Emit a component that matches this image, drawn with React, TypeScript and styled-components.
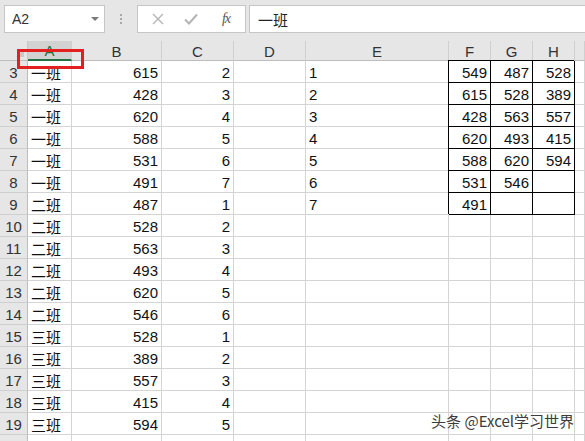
import React from "react";
import styled, { createGlobalStyle } from "styled-components";

const Global = createGlobalStyle`
  html, body { margin: 0; padding: 0; background: #fff; overflow: hidden; }
  body { font-family: "Liberation Sans", "Noto Sans CJK SC", sans-serif; }
  * { box-sizing: border-box; }
`;

const Page = styled.div`
  width: 585px;
  height: 441px;
  position: relative;
  overflow: hidden;
  background: #fff;
`;

const FormulaBar = styled.div`
  height: 41px;
  background: #e6e6e6;
  display: flex;
  align-items: flex-start;
  padding: 5px 0 0 4px;
`;

const NameBox = styled.div`
  width: 101px;
  height: 28px;
  background: #fff;
  border: 1px solid #c6c6c6;
  display: flex;
  align-items: center;
  justify-content: space-between;
  padding: 0 5px 0 7px;
  font-size: 14px;
  color: #333;
`;

const DropTri = styled.span`
  width: 0;
  height: 0;
  border-left: 4px solid transparent;
  border-right: 4px solid transparent;
  border-top: 4px solid #7a7a7a;
`;

const Dots = styled.div`
  width: 32px;
  height: 28px;
  display: flex;
  flex-direction: column;
  align-items: center;
  justify-content: center;
  gap: 2px;
`;

const Dot = styled.span`
  width: 2px;
  height: 2px;
  background: #a8a8a8;
`;

const ButtonsBox = styled.div`
  width: 109px;
  height: 28px;
  background: #fff;
  border: 1px solid #c6c6c6;
  display: flex;
  align-items: center;
  padding: 0 0 0 11px;
  gap: 15px;
`;

const IconSlot = styled.span`
  width: 18px;
  height: 18px;
  display: flex;
  align-items: center;
  justify-content: center;
`;

const Fx = styled.span`
  font-family: "Liberation Serif", serif;
  font-style: italic;
  font-size: 14px;
  color: #555;
  margin-left: 4px;
  letter-spacing: -1px;
`;

const FormulaInput = styled.div`
  flex: 1;
  height: 28px;
  margin-left: 3px;
  background: #fff;
  border: 1px solid #c6c6c6;
  border-right: none;
  display: flex;
  align-items: center;
  padding-left: 8px;
  font-family: "Noto Sans CJK SC", sans-serif;
  font-size: 15px;
  color: #222;
`;

const Grid = styled.div`
  display: grid;
  grid-template-columns: 28px 44px 90px 72px 72px 143px 42px 42px 42px 1fr;
  grid-auto-rows: 22px;
  grid-template-rows: 20px;
`;

const Corner = styled.div`
  background: #e6e6e6;
  border-right: 1px solid #c6c6c6;
  border-bottom: 1px solid #bdbdbd;
  display: flex;
  align-items: flex-end;
  justify-content: flex-end;
  padding: 0 3px 3px 0;
`;

const CornerTri = styled.span`
  width: 0;
  height: 0;
  border-left: 8px solid transparent;
  border-bottom: 8px solid #c8c8c8;
`;

const ColHead = styled.div<{ $active?: boolean }>`
  background: ${(p) => (p.$active ? "#d2d2d2" : "#e6e6e6")};
  border-right: 1px solid #cfcfcf;
  border-bottom: ${(p) => (p.$active ? "2px solid #217346" : "1px solid #bdbdbd")};
  display: flex;
  align-items: center;
  justify-content: center;
  font-size: 15px;
  color: ${(p) => (p.$active ? "#217346" : "#333")};
  padding-top: 1px;
`;

const RowHead = styled.div`
  background: #e6e6e6;
  border-right: 1px solid #bdbdbd;
  border-bottom: 1px solid #cfcfcf;
  display: flex;
  align-items: center;
  justify-content: center;
  font-size: 15px;
  color: #333;
  padding-top: 2px;
`;

const Cell = styled.div<{ $align?: "left" | "right"; $boxed?: boolean; $cjk?: boolean }>`
  border-right: 1px solid ${(p) => (p.$boxed ? "#000" : "#d4d4d4")};
  border-bottom: 1px solid ${(p) => (p.$boxed ? "#000" : "#d4d4d4")};
  ${(p) => (p.$boxed ? "box-shadow: -1px -1px 0 #000; position: relative; z-index: 1;" : "")}
  display: flex;
  align-items: center;
  justify-content: ${(p) => (p.$align === "right" ? "flex-end" : "flex-start")};
  padding: 2px 3px 0 3px;
  font-family: ${(p) =>
    p.$cjk ? '"Noto Sans CJK SC", sans-serif' : '"Liberation Sans", sans-serif'};
  font-size: 15px;
  color: #111;
  white-space: nowrap;
`;

const Highlight = styled.div`
  position: absolute;
  left: 17px;
  top: 49px;
  width: 67px;
  height: 20px;
  border: 3px solid #e3201f;
  pointer-events: none;
  z-index: 5;
`;

const Watermark = styled.div`
  position: absolute;
  right: 11px;
  top: 410px;
  font-family: "Noto Sans CJK SC", sans-serif;
  font-size: 15px;
  color: #3c3c3c;
  text-shadow: 0 0 2px #fff, 0 0 2px #fff, 0 0 3px #fff;
  z-index: 6;
`;

const classes = [
  "一班", "一班", "一班", "一班", "一班", "一班",
  "二班", "二班", "二班", "二班", "二班", "二班",
  "三班", "三班", "三班", "三班", "三班",
];
const scores = [615, 428, 620, 588, 531, 491, 487, 528, 563, 493, 620, 546, 528, 389, 557, 415, 594];
const ranks = [2, 3, 4, 5, 6, 7, 1, 2, 3, 4, 5, 6, 1, 2, 3, 4, 5];
const table: (number | null)[][] = [
  [549, 487, 528],
  [615, 528, 389],
  [428, 563, 557],
  [620, 493, 415],
  [588, 620, 594],
  [531, 546, null],
  [491, null, null],
];

const cols = ["A", "B", "C", "D", "E", "F", "G", "H", ""];

export default function App() {
  return (
    <Page>
      <Global />
      <FormulaBar>
        <NameBox>
          <span>A2</span>
          <DropTri />
        </NameBox>
        <Dots>
          <Dot />
          <Dot />
          <Dot />
        </Dots>
        <ButtonsBox>
          <IconSlot>
            <svg width="12" height="12" viewBox="0 0 12 12">
              <path d="M1 1L11 11M11 1L1 11" stroke="#b4b4b4" strokeWidth="1.4" fill="none" />
            </svg>
          </IconSlot>
          <IconSlot>
            <svg width="14" height="12" viewBox="0 0 14 12">
              <path d="M1 6.5L5 10.5L13 1.5" stroke="#b4b4b4" strokeWidth="2" fill="none" />
            </svg>
          </IconSlot>
          <IconSlot>
            <Fx>fx</Fx>
          </IconSlot>
        </ButtonsBox>
        <FormulaInput>一班</FormulaInput>
      </FormulaBar>
      <Grid>
        <Corner>
          <CornerTri />
        </Corner>
        {cols.map((c, i) => (
          <ColHead key={i} $active={c === "A"}>
            {c}
          </ColHead>
        ))}
        {classes.map((cls, r) => {
          const t = table[r];
          return (
            <React.Fragment key={r}>
              <RowHead>{r + 3}</RowHead>
              <Cell $cjk>{cls}</Cell>
              <Cell $align="right">{scores[r]}</Cell>
              <Cell $align="right">{ranks[r]}</Cell>
              <Cell />
              <Cell>{t ? r + 1 : ""}</Cell>
              {[0, 1, 2].map((k) => (
                <Cell key={k} $align="right" $boxed={!!t}>
                  {t && t[k] !== null ? t[k] : ""}
                </Cell>
              ))}
              <Cell />
            </React.Fragment>
          );
        })}
        <RowHead />
        {cols.map((_, i) => (
          <Cell key={i} />
        ))}
      </Grid>
      <Highlight />
      <Watermark>头条 @Excel学习世界</Watermark>
    </Page>
  );
}
